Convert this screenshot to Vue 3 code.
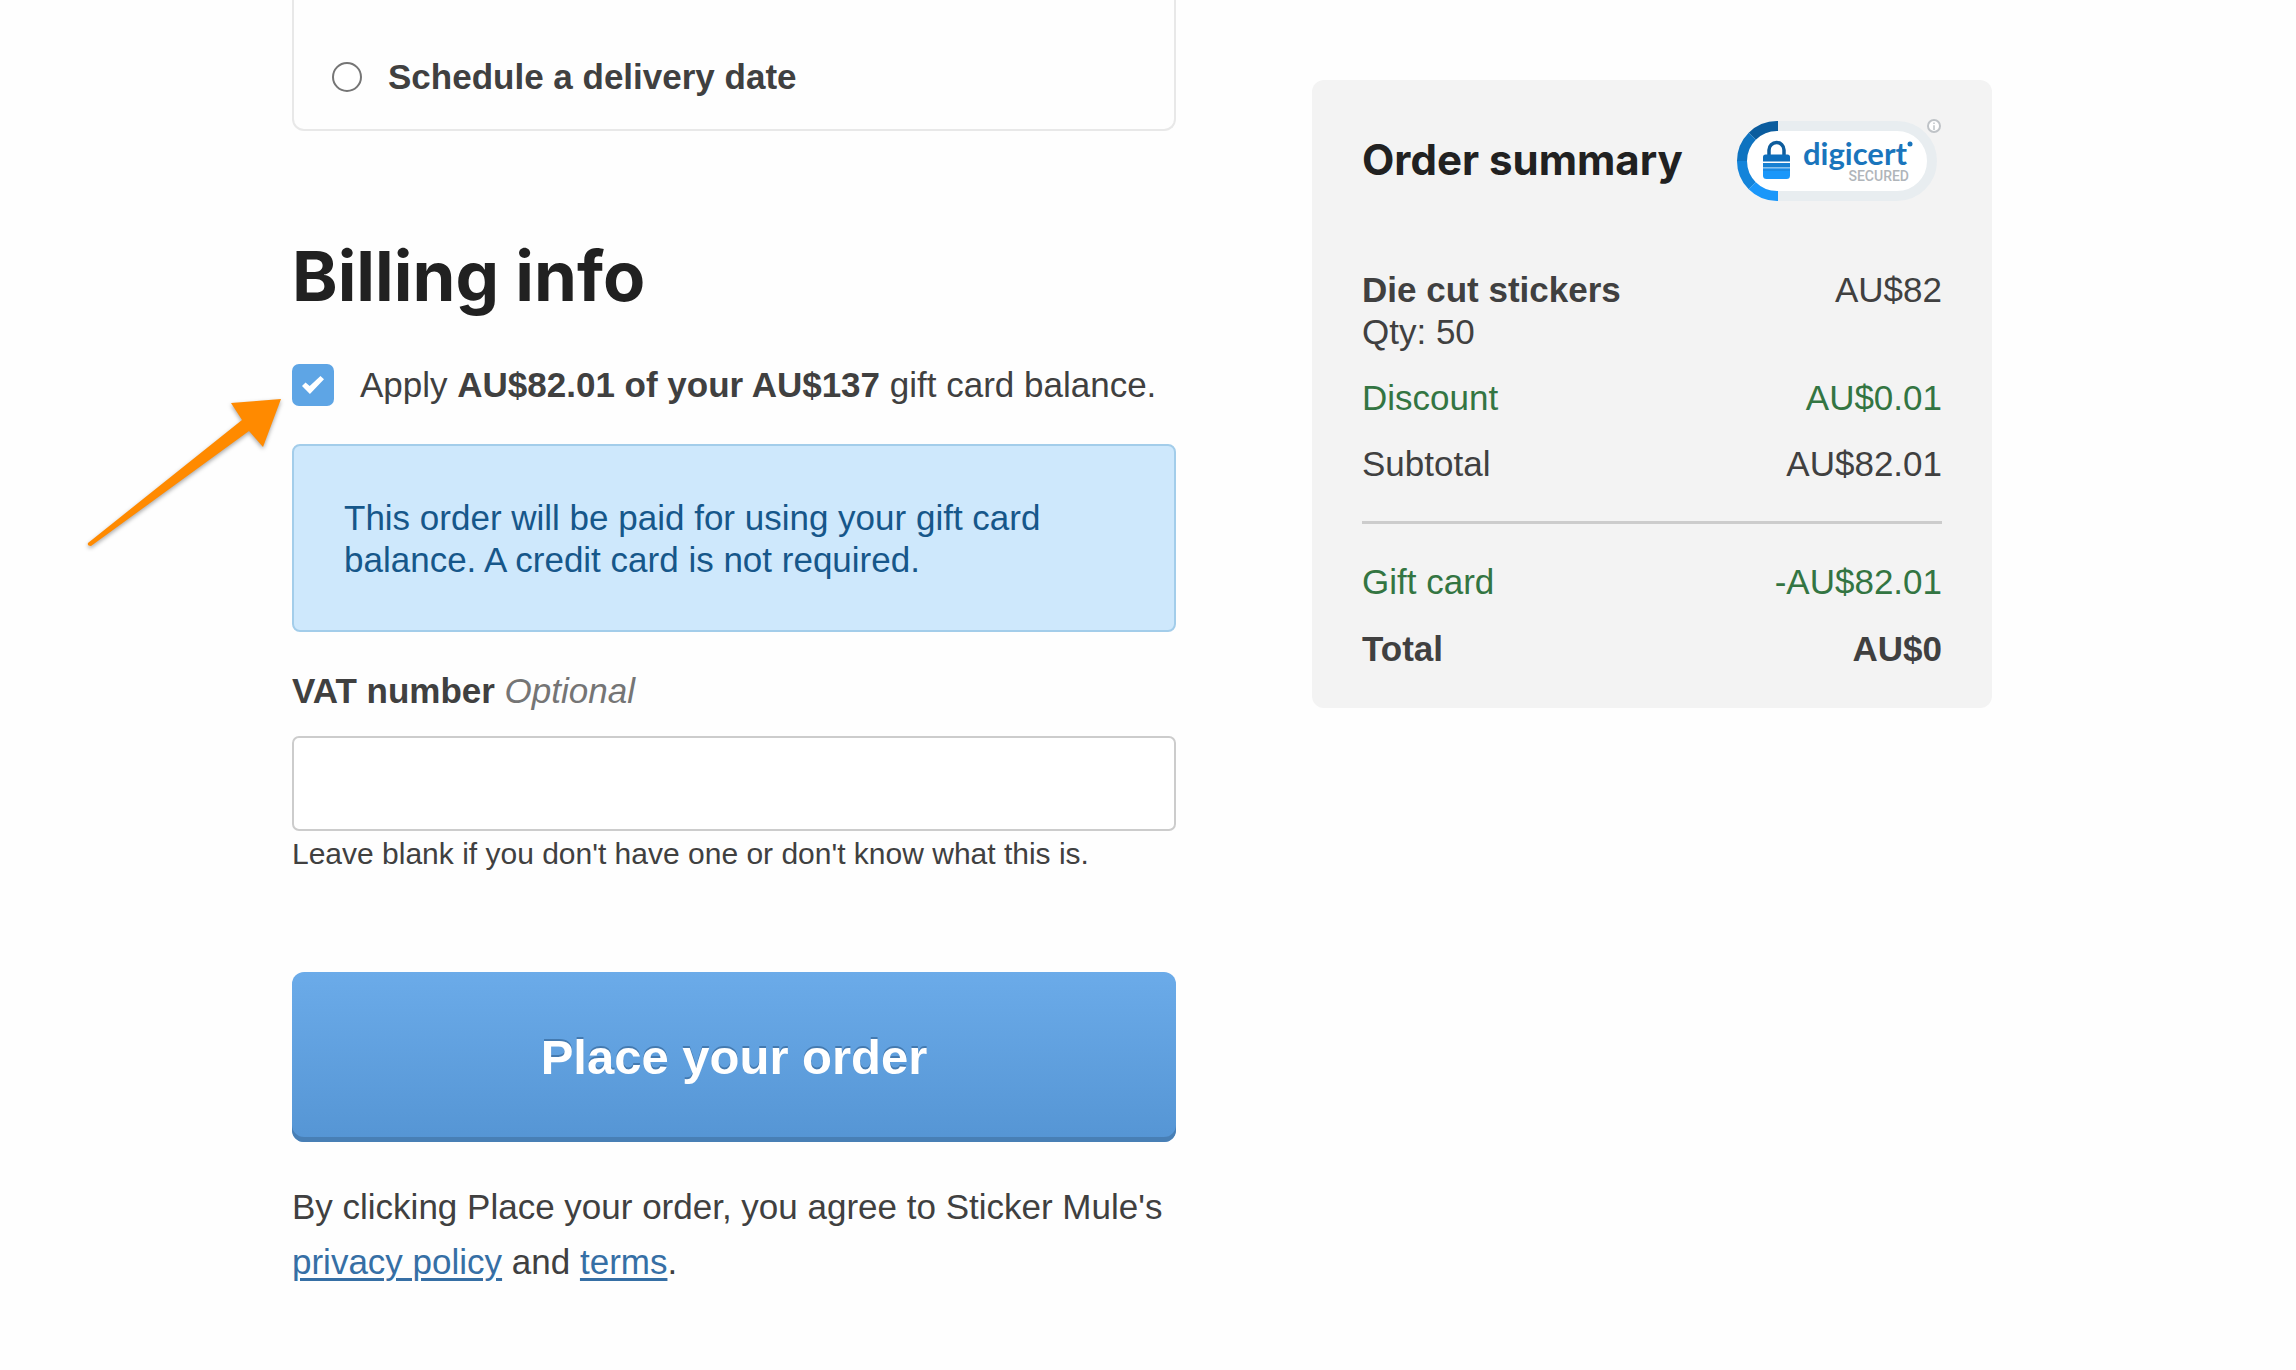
<script setup>
import { ref } from 'vue'

const delivery = ref('')
const applyGiftCard = ref(true)
const vatNumber = ref('')

const adjustments = [
  { label: 'Discount', amount: 'AU$0.01', credit: true },
  { label: 'Subtotal', amount: 'AU$82.01', credit: false },
]
</script>

<template>
  <main class="checkout">
    <form class="checkout-form" @submit.prevent>
      <div class="delivery-card">
        <label class="option">
          <input v-model="delivery" class="radio" type="radio" name="delivery" value="scheduled" />
          <strong>Schedule a delivery date</strong>
        </label>
      </div>

      <h1>Billing info</h1>

      <div class="gift-card">
        <label class="option">
          <input v-model="applyGiftCard" class="checkbox" type="checkbox" />
          <span>Apply <strong>AU$82.01 of your AU$137</strong> gift card balance.</span>
        </label>
        <svg class="pointer" viewBox="0 0 210 170" aria-hidden="true">
          <path d="M201 9 151 13 162 30 8 153Q7 156 11 156L169 41 183 57Z" fill="#ff8a00" />
        </svg>
      </div>

      <p class="notice">
        This order will be paid for using your gift card balance. A credit card is not required.
      </p>

      <label class="field-label" for="vat"><strong>VAT number</strong> <em>Optional</em></label>
      <input id="vat" v-model="vatNumber" class="field" type="text" aria-describedby="vat-hint" />
      <p id="vat-hint" class="hint">Leave blank if you don't have one or don't know what this is.</p>

      <button class="submit" type="submit">Place your order</button>

      <p class="legal">
        By clicking Place your order, you agree to Sticker Mule's
        <a href="#privacy">privacy policy</a> and <a href="#terms">terms</a>.
      </p>
    </form>

    <aside class="summary">
      <header class="summary-header">
        <h2>Order summary</h2>
        <svg class="seal" viewBox="0 0 206 84" role="img" aria-label="DigiCert secured">
          <rect x="6" y="8" width="190" height="70" rx="35" fill="#fff" stroke="#e8edf0" stroke-width="10" />
          <g fill="none" stroke-width="10">
            <path d="M42 8H41A35 35 0 0 0 16.25 18.25" stroke="#0a5c9e" />
            <path d="M16.25 18.25A35 35 0 0 0 6 43" stroke="#0e73c0" />
            <path d="M6 43A35 35 0 0 0 16.25 67.75" stroke="#1384da" />
            <path d="M16.25 67.75A35 35 0 0 0 41 78H42" stroke="#1a97fa" />
          </g>
          <path d="M33 38V32a7.5 7.5 0 0 1 15 0V38" fill="none" stroke="#0d5c9c" stroke-width="3.5" />
          <path d="M27 43.5V39a2.5 2.5 0 0 1 2.5-2.5H51.5A2.5 2.5 0 0 1 54 39V43.5Z" fill="#0e6ebb" />
          <path d="M27 45H54V49.5H27Z" fill="#1780d2" />
          <path d="M27 50.5H54V57.5A3.5 3.5 0 0 1 50.5 61H30.5A3.5 3.5 0 0 1 27 57.5Z" fill="#1a97fa" />
          <path d="M27 50.5H54V53H27Z" fill="#1a8ae4" />
          <text x="67" y="47" class="seal-name">digicert</text>
          <circle cx="174" cy="26" r="2.5" fill="#1a75bc" />
          <text x="173" y="63" text-anchor="end" class="seal-note">SECURED</text>
          <circle cx="198" cy="8" r="6" fill="#fff" stroke="#bfc3c7" stroke-width="2" />
          <path d="M198 4.5V6M198 7.2V12" stroke="#bfc3c7" stroke-width="1.5" />
        </svg>
      </header>

      <dl class="lines">
        <div class="line">
          <dt><strong>Die cut stickers</strong><br />Qty: 50</dt>
          <dd>AU$82</dd>
        </div>
        <div v-for="row in adjustments" :key="row.label" class="line" :class="{ credit: row.credit }">
          <dt>{{ row.label }}</dt>
          <dd>{{ row.amount }}</dd>
        </div>
      </dl>
      <dl class="lines totals">
        <div class="line credit">
          <dt>Gift card</dt>
          <dd>-AU$82.01</dd>
        </div>
        <div class="line total">
          <dt>Total</dt>
          <dd>AU$0</dd>
        </div>
      </dl>
    </aside>
  </main>
</template>

<style>
body {
  background: #fefefe;
}
</style>

<style scoped>
.checkout {
  display: grid;
  grid-template-columns: 13fr 10fr;
  align-items: start;
  gap: 136px;
  padding: 0 304px 80px 292px;
  color: #404040;
  font: 35px/42px "Liberation Sans", Arial, sans-serif;
}

.checkout-form {
  display: flex;
  flex-direction: column;
}

.delivery-card {
  padding: 56px 38px 31px;
  border: 2px solid #e8e8e8;
  border-top: 0;
  border-radius: 0 0 12px 12px;
}

.option {
  display: flex;
  align-items: center;
  gap: 26px;
}

.radio,
.checkbox {
  flex: none;
  margin: 0;
  appearance: none;
}

.radio {
  width: 30px;
  height: 30px;
  border: 2px solid #757575;
  border-radius: 50%;
  background: #fff;
}

.radio:checked {
  border-width: 9px;
  border-color: #5ea5e5;
}

.checkbox {
  display: grid;
  place-items: center;
  width: 42px;
  height: 42px;
  border-radius: 7px;
  background: #5ea5e5;
}

.checkbox:not(:checked) {
  border: 2px solid #ccc;
  background: #fff;
}

.checkbox:checked::before {
  content: "";
  width: 22px;
  height: 18px;
  background: #fff;
  clip-path: polygon(0 55%, 16% 36%, 35% 56%, 84% 0, 100% 18%, 36% 100%);
}

h1,
h2 {
  margin: 0;
  color: #212121;
  font-family: Inter, sans-serif;
  font-weight: 700;
}

h1 {
  margin: 105px 0 48px;
  font-size: 69px;
  line-height: 80px;
}

.gift-card {
  position: relative;
}

.pointer {
  position: absolute;
  top: 26px;
  left: -212px;
  width: 210px;
  height: 170px;
  filter: drop-shadow(0 2px 2px rgb(0 0 0 / 35%));
  pointer-events: none;
}

.notice {
  margin: 38px 0;
  padding: 51px 50px 49px;
  border: 2px solid #a3cdea;
  border-radius: 8px;
  background: #cee8fc;
  color: #16578a;
}

.field-label {
  margin-bottom: 24px;
}

.field-label em {
  color: #757575;
}

.field {
  box-sizing: border-box;
  width: 100%;
  height: 95px;
  padding: 0 24px;
  border: 2px solid #ccc;
  border-radius: 7px;
  background: #fff;
  color: inherit;
  font: inherit;
}

.hint {
  margin: 5px 0 100px;
  font-size: 30px;
  line-height: 36px;
}

.submit {
  height: 170px;
  padding: 0;
  border: 0;
  border-radius: 12px;
  background: linear-gradient(#6babe9, #5595d4);
  box-shadow: inset 0 -5px #487fb5;
  color: #fff;
  font: bold 49px/60px "Liberation Sans", Arial, sans-serif;
  text-shadow: 0 -2px #447ab0;
  cursor: pointer;
}

.legal {
  margin: 37px 0 0;
  line-height: 55px;
}

.legal a {
  color: #366fa5;
  text-decoration-thickness: 3px;
  text-underline-offset: 4px;
}

.summary {
  margin-top: 80px;
  padding: 38px 50px;
  border-radius: 12px;
  background: #f3f3f3;
}

.summary-header {
  display: flex;
  align-items: center;
  justify-content: space-between;
  margin-bottom: 67px;
}

h2 {
  font-size: 42px;
  line-height: 50px;
}

.seal {
  flex: none;
  width: 206px;
  height: 84px;
}

.seal-name {
  fill: #1a75bc;
  font: bold 31px Lato, sans-serif;
}

.seal-note {
  fill: #b0b5ba;
  font: 500 14px Roboto, sans-serif;
}

.lines {
  display: flex;
  flex-direction: column;
  gap: 24px;
  margin: 0;
}

.line {
  display: flex;
  justify-content: space-between;
}

.line dd {
  margin: 0;
}

.totals {
  gap: 25px;
  margin-top: 36px;
  padding-top: 37px;
  border-top: 3px solid #ccc;
}

.credit {
  color: #337542;
}

.total {
  font-weight: bold;
}

@media (max-width: 1800px) {
  .checkout {
    grid-template-columns: 1fr;
    gap: 0;
    padding: 0 48px 80px;
  }

  .pointer {
    display: none;
  }
}
</style>
